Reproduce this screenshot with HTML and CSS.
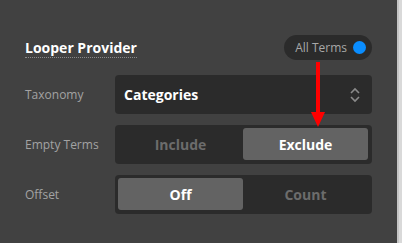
FILE: index.html
```html
<!DOCTYPE html>
<html lang="en">
<head>
    <meta charset="UTF-8">
    <meta name="viewport" content="width=device-width, initial-scale=1.0">
    <title>Looper Provider</title>
    <link rel="stylesheet" href="styles.css">
</head>
<body>
    <div class="page">
        <div class="panel">
            <div class="head">
                <span class="title">Looper Provider</span>
                <div class="pill">
                    <span>All Terms</span>
                    <span class="dot"></span>
                </div>
            </div>

            <div class="row">
                <span class="label">Taxonomy</span>
                <div class="select">
                    <span>Categories</span>
                    <svg class="chevrons" width="12" height="16" viewBox="0 0 12 16">
                        <path d="M2 6 L6 2 L10 6 M2 10 L6 14 L10 10" fill="none" stroke="#8a8a8a" stroke-width="1.6"/>
                    </svg>
                </div>
            </div>

            <div class="row">
                <span class="label">Empty Terms</span>
                <div class="segment">
                    <span class="option">Include</span>
                    <span class="option active">Exclude</span>
                </div>
            </div>

            <div class="row">
                <span class="label">Offset</span>
                <div class="segment">
                    <span class="option active">Off</span>
                    <span class="option">Count</span>
                </div>
            </div>
        </div>
        <div class="scrollbar"></div>

        <!-- annotation arrow -->
        <svg class="arrow" width="18" height="68" viewBox="0 0 18 68">
            <rect x="6" y="0" width="4" height="52" fill="#ff0000"/>
            <polygon points="1,50 15,50 8,65" fill="#ff0000"/>
        </svg>
    </div>
</body>
</html>
```

FILE: styles.css
```css
body {
    margin: 0;
    padding: 0;
    font-family: "Open Sans", "Noto Sans", sans-serif;
    background-color: #414141;
}

.page {
    position: relative;
    display: flex;
    height: 243px;
    overflow: hidden;
}

.panel {
    flex: 1;
    padding: 35px 25px 0 25px;
}

.scrollbar {
    width: 3px;
    background: #d9d9d9;
    border-left: 2px solid #c4c4c4;
}

.head {
    display: flex;
    justify-content: space-between;
    align-items: center;
    height: 25px;
    margin-bottom: 15px;
}

.title {
    color: #ffffff;
    font-size: 14px;
    font-weight: 700;
    padding-top: 2px;
    border-bottom: 1px dotted #8a8a8a;
    line-height: 18px;
}

.pill {
    display: flex;
    align-items: center;
    height: 25px;
    padding: 0 6px 0 11px;
    border-radius: 13px;
    background: #2b2b2b;
    color: #a8a8a8;
    font-size: 12px;
}

.dot {
    width: 13px;
    height: 13px;
    margin-left: 6px;
    border-radius: 50%;
    background: #0a8dff;
}

.row {
    display: flex;
    align-items: center;
    height: 39px;
    margin-bottom: 11px;
}

.label {
    width: 90px;
    color: #a3a3a3;
    font-size: 12px;
}

.select {
    flex: 1;
    height: 100%;
    display: flex;
    align-items: center;
    justify-content: space-between;
    padding: 0 11px 0 9px;
    background: #2b2b2b;
    border-radius: 4px;
    color: #ffffff;
    font-size: 14px;
    font-weight: 700;
    box-sizing: border-box;
}

.segment {
    flex: 1;
    height: 100%;
    display: flex;
    padding: 3px 4px 4px 3px;
    background: #2b2b2b;
    border-radius: 4px;
    box-sizing: border-box;
}

.option {
    flex: 1;
    display: flex;
    align-items: center;
    justify-content: center;
    border-radius: 3px;
    color: #6c6c6c;
    font-size: 14px;
    font-weight: 700;
}

.option.active {
    background: #636363;
    color: #ffffff;
}

.arrow {
    position: absolute;
    left: 310px;
    top: 62px;
}
```
